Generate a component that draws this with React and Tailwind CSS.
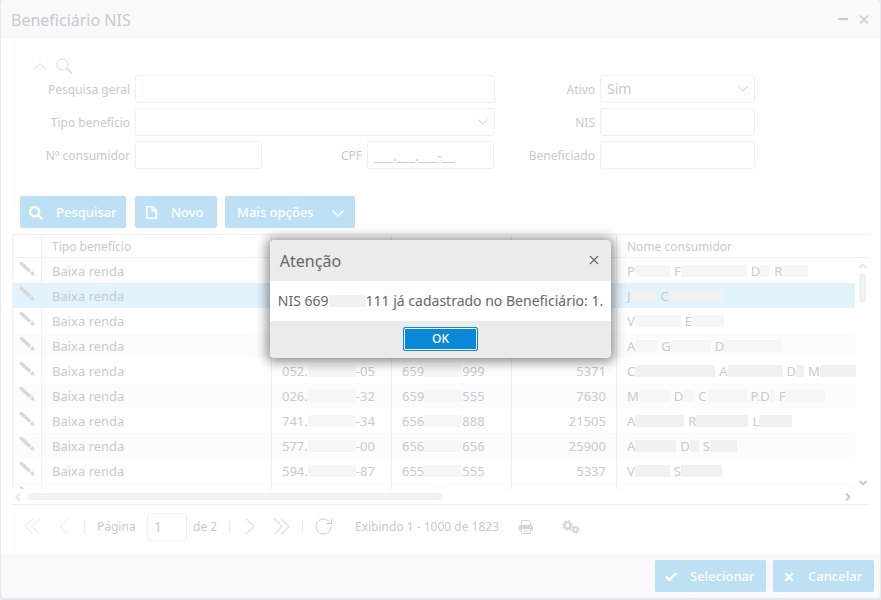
import React, { useState } from "react";
import { FaSearch, FaCheck, FaTimes } from "react-icons/fa";

// masked parts of a name are [initials, hidden width]
const ROWS = [
  { name: [["P", 35], ["F", 66], ["D", 10], ["R", 26]] },
  { name: [["J", 26], ["C", 54]], selected: true },
  { name: [["V", 46], ["E", 32]] },
  { name: [["A", 22], ["G", 40], ["D", 58]] },
  { cpf: ["052.", "-05"], nis: ["659", "999"], code: "5371", name: [["C", 80], ["A", 55], ["D", 8], ["M", 36]], dark: true },
  { cpf: ["026.", "-32"], nis: ["659", "555"], code: "7630", name: [["M", 31], ["D", 11], ["C", 40], ["P.D", 5], ["F", 40]] },
  { cpf: ["741.", "-34"], nis: ["656", "888"], code: "21505", name: [["A", 49], ["R", 52], ["L", 33]], dark: true },
  { cpf: ["577.", "-00"], nis: ["656", "656"], code: "25900", name: [["A", 41], ["D", 9], ["S", 27]], dark: true },
  { cpf: ["594.", "-87"], nis: ["655", "555"], code: "5337", name: [["V", 35], ["S", 41]], dark: true },
  { name: [] },
];

const Chevron = ({ points, size = 12, width = 1, className = "" }) => (
  <svg width={size} height={size} viewBox="0 0 12 12" fill="none" stroke="currentColor" strokeWidth={width} className={className}>
    <polyline points={points} />
  </svg>
);

const Pencil = () => (
  <svg width="17" height="17" viewBox="0 0 17 17" fill="currentColor" className="text-[#d8dada]">
    <path d="M3.600 1.300 12.300 9.200 9.900 11.800 1.300 4C.3 2.900.2 2.200 1 1.300 1.800.4 2.700.4 3.600 1.300Z" />
    <path d="M13.200 10.100 14.900 11.600 15.700 14.800 12.500 14.200 10.900 12.700Z" />
  </svg>
);

const File = ({ className }) => (
  <svg width="11" height="13" viewBox="0 0 11 13" fill="none" stroke="currentColor" strokeWidth="1.500" className={className}>
    <path d="M.8.8H6.800L10.200 4.200V12.200H.8Z" />
    <path d="M6.300 1V4.700H10" />
  </svg>
);

const Printer = () => (
  <svg width="14" height="14" viewBox="0 0 14 14" fill="currentColor">
    <path d="M2.500 5V.5h7.200l1.800 1.800V5" fill="none" stroke="currentColor" />
    <path fillRule="evenodd" d="M1.500 5h11Q14 5 14 6.500V10.500H12V8.500H2V10.500H0V6.500Q0 5 1.500 5ZM11.300 6.200h1.200v1.200h-1.200Z" />
    <path d="M2.500 8.500h9v5h-9zM4.500 11h5" fill="none" stroke="currentColor" />
  </svg>
);

const Gears = () => (
  <svg width="18" height="14" viewBox="0 0 18 14" fill="none" stroke="currentColor">
    <circle cx="5.500" cy="5.500" r="3" strokeWidth="2.200" />
    <circle cx="5.500" cy="5.500" r="4.500" strokeWidth="1.800" strokeDasharray="1.770 1.770" />
    <circle cx="13.500" cy="9.500" r="2.200" strokeWidth="1.800" />
    <circle cx="13.500" cy="9.500" r="3.400" strokeWidth="1.500" strokeDasharray="1.530 1.530" />
  </svg>
);

const Hidden = ({ width, dark }) => (
  <span
    className={`inline-block h-3 align-[-1px] ${dark ? "bg-[#f0f1f1]" : "bg-[#f6f6f6]"}`}
    style={{ width }}
  />
);

const inputClass = "h-7 w-full min-w-0 rounded-[3px] border border-[#efefef] bg-white px-[6px] text-[#c8cacc] outline-none";

function Field({ id, label, labelClass, children }) {
  return (
    <div className="flex min-w-0 items-center gap-[5px]">
      <label htmlFor={id} className={`shrink-0 pt-[2px] text-right text-xs ${labelClass}`}>{label}</label>
      {children}
    </div>
  );
}

function Select({ id, children }) {
  return (
    <div className="relative flex-1">
      <select id={id} className={`${inputClass} appearance-none text-sm`}>{children}</select>
      <Chevron points="1.500,3.500 6,8 10.500,3.500" className="pointer-events-none absolute top-2 right-[6px]" />
    </div>
  );
}

function BlueButton({ children, className = "", ...props }) {
  return (
    <button type="button" className={`flex h-8 items-center rounded-[2px] bg-[#bde0f5] pt-px text-[13px] font-medium text-white ${className}`} {...props}>
      {children}
    </button>
  );
}

export default function App() {
  const [open, setOpen] = useState(true);

  return (
    <div className="relative h-screen bg-[#e4e9ee] px-px pb-[2px] font-['Noto_Sans',sans-serif] text-[#c8cacc]">
      <main className="flex h-full flex-col overflow-hidden rounded-[4px] bg-white">
        {/* Title bar */}
        <header className="flex h-[39px] shrink-0 items-center justify-between bg-[#f9f9f9] pr-[11px] pl-[10px]">
          <h1 className="text-base">Beneficiário NIS</h1>
          <div className="flex items-center gap-[11px]">
            <button type="button" aria-label="Minimizar">
              <svg width="10" height="10" viewBox="0 0 10 10" stroke="currentColor" strokeWidth="2"><path d="M0 4h10" /></svg>
            </button>
            <button type="button" aria-label="Fechar">
              <svg width="10" height="10" viewBox="0 0 10 10" stroke="currentColor" strokeWidth="1.300"><path d="M1 .5l8 8M9 .5L1 8.500" /></svg>
            </button>
          </div>
        </header>

        {/* Search form */}
        <form className="shrink-0 pt-[18px] pr-[125px] pl-5" onSubmit={(e) => e.preventDefault()}>
          <div className="flex h-[18px] items-center gap-[10px] pl-[13px] text-[#d6d8d9]">
            <Chevron points="0.500,9 6,3.500 11.500,9" />
            <svg width="17" height="17" viewBox="0 0 17 17" fill="none" stroke="currentColor">
              <circle cx="6.500" cy="6.500" r="5.500" />
              <path d="M10.500 10.500l5.500 5" strokeWidth="1.500" />
            </svg>
          </div>
          <div className="grid grid-cols-[1fr_260px] gap-y-[5px]">
            <Field id="geral" label="Pesquisa geral" labelClass="w-[109px]">
              <input id="geral" className={`${inputClass} flex-1`} />
            </Field>
            <Field id="ativo" label="Ativo" labelClass="w-[100px]">
              <Select id="ativo"><option>Sim</option></Select>
            </Field>
            <Field id="tipo" label="Tipo benefício" labelClass="w-[109px]">
              <Select id="tipo"><option></option></Select>
            </Field>
            <Field id="nis" label="NIS" labelClass="w-[100px]">
              <input id="nis" className={`${inputClass} flex-1`} />
            </Field>
            <div className="grid grid-cols-[241px_1fr] pr-px">
              <Field id="consumidor" label="Nº consumidor" labelClass="w-[109px]">
                <input id="consumidor" className={inputClass} />
              </Field>
              <Field id="cpf" label="CPF" labelClass="w-[100px]">
                <input id="cpf" defaultValue="___.___.___-__" className={`${inputClass} text-sm`} />
              </Field>
            </div>
            <Field id="beneficiado" label="Beneficiado" labelClass="w-[100px]">
              <input id="beneficiado" className={`${inputClass} flex-1`} />
            </Field>
          </div>
        </form>

        <div className="mt-[27px] flex shrink-0 pl-[19px]">
          <BlueButton className="w-[106px] pl-[9px]"><FaSearch size={14} className="mr-[13px]" />Pesquisar</BlueButton>
          <BlueButton className="ml-[9px] w-[82px] pl-[11px]"><File className="mr-[14px]" />Novo</BlueButton>
          <BlueButton className="ml-2 w-[130px] justify-between pr-[11px] pl-3">
            Mais opções
            <Chevron points="0.500,3.500 6,9 11.500,3.500" width={1.5} />
          </BlueButton>
        </div>

        {/* Results grid */}
        <section className="mt-[6px] mr-[10px] ml-[11px] flex min-h-0 flex-1 flex-col border-b border-[#efefef]">
          <div className="flex min-h-0 flex-1 overflow-hidden">
            <table className="h-fit w-full flex-1 table-fixed border-separate border-spacing-0 text-[13px]">
              <thead>
                <tr className="h-6 text-left text-xs [&>th]:border-y [&>th]:border-r [&>th]:border-[#efefef] [&>th]:pt-px [&>th]:font-normal">
                  <th className="w-[30px] border-l" />
                  <th className="w-[230px] px-[10px]">Tipo benefício</th>
                  <th className="w-[120px]" />
                  <th className="w-[120px]" />
                  <th className="w-[105px]" />
                  <th className="border-r-0! px-[10px]">Nome consumidor</th>
                </tr>
              </thead>
              <tbody>
                {ROWS.map((row, i) => (
                  <tr
                    key={i}
                    className={`h-[25px] whitespace-nowrap [&>td]:border-r [&>td]:border-[#efefef] [&>td]:p-0 ${
                      row.selected ? "bg-[#e1f3fc]" : i % 2 ? "bg-[#fcfcfc]" : ""
                    }`}
                  >
                    <td className="border-l"><div className="flex h-[25px] pt-[3px] pl-[6px]"><Pencil /></div></td>
                    <td className="px-[10px]! pt-[2px]!">{row.name.length > 0 && "Baixa renda"}</td>
                    <td className="px-[10px]! pt-[2px]!">{row.cpf && <>{row.cpf[0]}<Hidden width={48} />{row.cpf[1]}</>}</td>
                    <td className="px-[10px]! pt-[2px]!">{row.nis && <>{row.nis[0]}<Hidden width={38} />{row.nis[1]}</>}</td>
                    <td className="px-[10px]! pt-[2px]! text-right">{row.code}</td>
                    <td className="border-r-0! pt-[2px]! pl-[10px]!">
                      <div className="flex items-center gap-1">
                        {row.name.map(([initial, width], n) => (
                          <span key={n}>{initial}<Hidden width={width} dark={row.dark || row.selected} /></span>
                        ))}
                      </div>
                    </td>
                  </tr>
                ))}
              </tbody>
            </table>
            <div className="flex w-[15px] shrink-0 flex-col items-center text-[#c8cacc]">
              <div className="h-6 w-full shrink-0 border-y border-[#efefef]" />
              <Chevron points="2.500,8 6,4.500 9.500,8" width={2} className="mt-[2px] shrink-0 text-[#e4e5e6]" />
              <div className="mt-px h-[30px] w-[7px] shrink-0 rounded-full bg-[#f0f2f2]" />
              <Chevron points="2.500,4 6,7.500 9.500,4" width={2} className="mt-auto" />
            </div>
          </div>
          <div className="flex h-[15px] shrink-0 items-center pr-4">
            <Chevron points="8,2.500 4.500,6 8,9.500" width={2} className="text-[#e4e5e6]" />
            <div className="ml-[3px] flex-1"><div className="h-[7px] w-[51%] rounded-full bg-[#eff3f2]" /></div>
            <Chevron points="4,2.500 7.500,6 4,9.500" width={2} />
          </div>
        </section>

        {/* Pager */}
        <nav className="flex h-[49px] shrink-0 items-center pb-[6px] pl-[23px] text-xs">
          <button type="button" aria-label="Primeira página" className="flex text-[#e4e5e6]">
            <svg width="17" height="17" viewBox="0 0 17 17" fill="none" stroke="currentColor"><path d="M9 .5l-8 8 8 8M16 .5l-8 8 8 8" /></svg>
          </button>
          <button type="button" aria-label="Página anterior" className="ml-[18px] text-[#e4e5e6]">
            <svg width="10" height="17" viewBox="0 0 10 17" fill="none" stroke="currentColor"><path d="M9 .5l-8 8 8 8" /></svg>
          </button>
          <span className="ml-[15px] h-[14px] w-px bg-[#ebebeb]" />
          <label htmlFor="pagina" className="ml-3 w-[50px]">Página</label>
          <input id="pagina" defaultValue="1" className="h-7 w-10 rounded-[3px] border border-[#efefef] px-[6px] text-sm outline-none" />
          <span className="ml-[6px] w-9">de 2</span>
          <span className="h-[14px] w-px bg-[#ebebeb]" />
          <button type="button" aria-label="Próxima página" className="ml-[15px]">
            <svg width="10" height="17" viewBox="0 0 10 17" fill="none" stroke="currentColor"><path d="M1 .5l8 8-8 8" /></svg>
          </button>
          <button type="button" aria-label="Última página" className="ml-[18px]">
            <svg width="17" height="17" viewBox="0 0 17 17" fill="none" stroke="currentColor"><path d="M1 .5l8 8-8 8M8 .5l8 8-8 8" /></svg>
          </button>
          <span className="ml-3 h-[14px] w-px bg-[#ebebeb]" />
          <button type="button" aria-label="Atualizar" className="ml-3">
            <svg width="17" height="17" viewBox="0 0 17 17" fill="none" stroke="currentColor"><path d="M16 8.500A7.500 7.500 0 1 1 14.500 4M16.500.5V5.500H11" /></svg>
          </button>
          <span className="ml-[23px] w-[164px]">Exibindo 1 - 1000 de 1823</span>
          <button type="button" aria-label="Imprimir" className="text-[#d3d6d6]"><Printer /></button>
          <button type="button" aria-label="Configurar" className="ml-[29px] text-[#d3d6d6]"><Gears /></button>
        </nav>

        <footer className="flex h-11 shrink-0 items-center justify-end gap-[7px] bg-[#f9f9f9] pr-[6px]">
          <BlueButton className="w-[111px] pl-[10px]"><FaCheck size={12} className="mr-[13px]" />Selecionar</BlueButton>
          <BlueButton className="w-[101px] pl-[10px]"><FaTimes size={12} className="mr-[13px]" />Cancelar</BlueButton>
        </footer>
      </main>

      {/* Warning dialog */}
      {open && (
        <div className="absolute inset-0 flex items-center justify-center pb-[2px]">
          <div role="alertdialog" aria-labelledby="aviso" className="overflow-hidden rounded-[4px] bg-[#ebebeb] text-[#666] shadow-[0_1px_12px_3px_rgba(0,0,0,0.45)]">
            <div className="flex h-[41px] items-center justify-between pr-3 pl-[10px]">
              <h2 id="aviso" className="text-base">Atenção</h2>
              <button type="button" aria-label="Fechar aviso" onClick={() => setOpen(false)}>
                <svg width="10" height="10" viewBox="0 0 10 10" stroke="currentColor" strokeWidth="1.200"><path d="M1 0l8 8M9 0L1 8" /></svg>
              </button>
            </div>
            <p className="h-10 bg-white px-2 text-sm leading-10 whitespace-nowrap">
              NIS 669<Hidden width={37} dark />111 já cadastrado no Beneficiário: 1.
            </p>
            <div className="flex h-[37px] items-center justify-center pb-px">
              <button
                type="button"
                onClick={() => setOpen(false)}
                className="h-6 w-[75px] rounded-[2px] border border-[#0888d6] bg-[#0888d6] text-xs font-medium text-white inset-ring inset-ring-white"
              >
                OK
              </button>
            </div>
          </div>
        </div>
      )}
    </div>
  );
}
